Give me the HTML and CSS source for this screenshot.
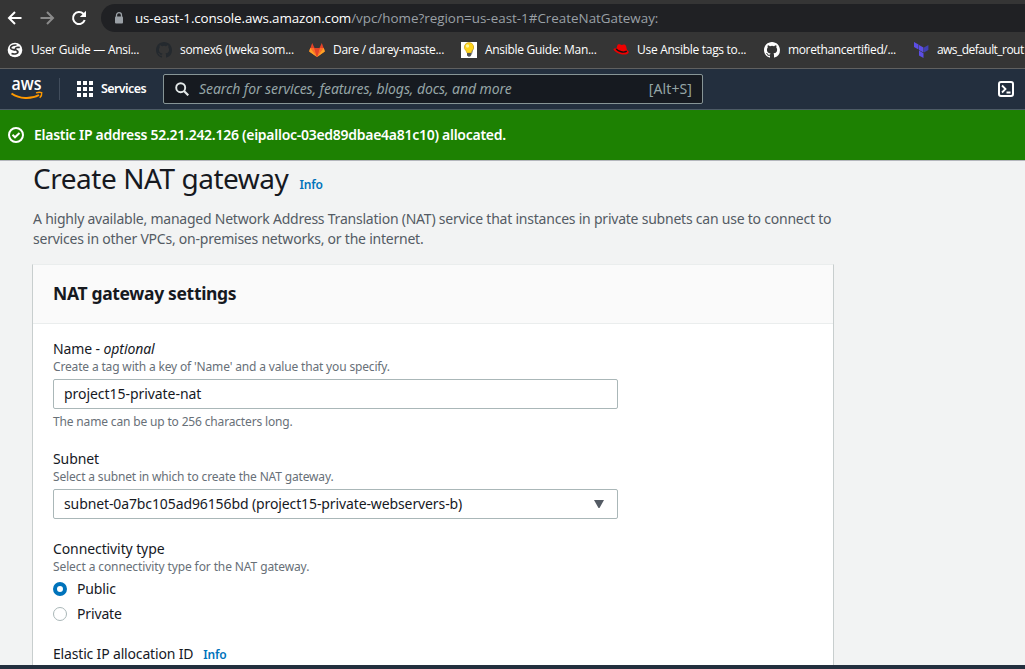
FILE: index.html
```html
<!DOCTYPE html>
<html lang="en">
<head>
<meta charset="utf-8">
<title>Create NAT gateway</title>
<link rel="stylesheet" href="styles.css">
</head>
<body>
<div class="toolbar">
  <svg class="nav-icon" viewBox="0 0 16 16"><path d="M14.5 8H2M8 2L2 8l6 6" fill="none" stroke="#fff" stroke-width="2"/></svg>
  <svg class="nav-icon" viewBox="0 0 16 16"><path d="M1.5 8H14M8 2l6 6-6 6" fill="none" stroke="#8b8b8b" stroke-width="2"/></svg>
  <svg class="nav-icon" viewBox="0 0 16 16"><path d="M13.7 10A6 6 0 1 1 12.3 3.8L14 5.500" fill="none" stroke="#fff" stroke-width="2"/><path d="M15 .8v6.200H8.800z" fill="#fff"/></svg>
  <div class="address">
    <svg class="lock" viewBox="0 0 10 12"><path d="M2.500 5V3.200a2.500 2.500 0 0 1 5 0V5" fill="none" stroke="#9aa0a6" stroke-width="1.300"/><rect x="1" y="4.500" width="8" height="7" rx="1" fill="#9aa0a6"/></svg>
    <span class="url"><span class="host">us-east-1.console.aws.amazon.com</span><span class="path">/vpc/home?region=us-east-1#CreateNatGateway:</span></span>
  </div>
</div>
<div class="bookmarks">
  <div class="bm bm1"><svg class="fav" viewBox="0 0 16 16"><circle cx="8" cy="8" r="7.300" fill="#fff"/><path d="M9.500 3C6 2.800 3.200 4.200 3.600 6.200c.3 1.600 3 1.200 4.600 2M12.800 5.500C10.500 5 8.500 5.500 8.300 7c-.1 1.500 2.700 1.400 2.700 3 0 1.500-3 2.700-6.500 1.500" fill="none" stroke="#353535" stroke-width="1.700"/></svg><span>User Guide — Ansi...</span></div>
  <div class="bm bm2"><svg class="fav" viewBox="0 0 16 16"><path fill="#24292e" d="M8 0C3.580 0 0 3.580 0 8c0 3.540 2.290 6.530 5.470 7.590.4.07.55-.17.55-.38 0-.19-.01-.82-.01-1.490-2.010.37-2.530-.49-2.690-.94-.09-.23-.48-.94-.82-1.130-.28-.15-.68-.52-.01-.53.63-.01 1.080.58 1.230.82.72 1.210 1.870.87 2.330.66.07-.52.28-.87.51-1.070-1.780-.2-3.640-.89-3.640-3.950 0-.87.31-1.590.82-2.150-.08-.2-.36-1.020.08-2.120 0 0 .67-.21 2.200.82a7.600 7.600 0 0 1 4 0c1.530-1.040 2.200-.82 2.200-.82.44 1.100.16 1.920.08 2.120.51.56.82 1.270.82 2.150 0 3.070-1.870 3.750-3.650 3.950.29.25.54.73.54 1.480 0 1.070-.01 1.930-.01 2.200 0 .21.15.46.55.38A8 8 0 0 0 16 8c0-4.420-3.580-8-8-8z"/></svg><span>somex6 (Iweka som...</span></div>
  <div class="bm bm3"><svg class="fav" viewBox="0 0 16 16"><path fill="#e24329" d="M3.200 1L1 7l7 8 7-8-2.200-6-2.300 5h-5z"/><path fill="#fc6d26" d="M.2 9.500L1.200 6h4L8 15zM15.800 9.500l-1-3.500h-4L8 15z"/><path fill="#fca326" d="M1.200 6L.2 9.500 8 15zM14.800 6l1 3.500L8 15z"/><path fill="#e24329" d="M5.400 6h5.200L8 15z"/></svg><span>Dare / darey-maste...</span></div>
  <div class="bm bm4"><svg class="fav" viewBox="0 0 16 16"><path fill="#fff" d="M0 0h16v16H0z"/><path d="M11 3l2 2-2 7-2 3z" fill="#888"/><path d="M8 .5a4.700 4.700 0 0 0-3 8.300l1 2.200h4l1-2.200A4.700 4.700 0 0 0 8 .5z" fill="#ffd51d" stroke="#c49a15" stroke-width=".6"/><circle cx="6.500" cy="4" r="1.700" fill="#fff7a0"/><path d="M6 11h4v2.500L8 15l-2-1.500z" fill="#555"/></svg><span>Ansible Guide: Man...</span></div>
  <div class="bm bm5"><svg class="fav" viewBox="0 0 16 16"><path d="M3 8l1.300-4.600c.3-1 1.500-1.600 3-1l1.400.5 2-.3c1.500 0 2 .5 2.400 1.700L14 8c1.400.7 2.200 2 1.300 3.200-1.600 2.200-8 1.800-12-1C1 8.700 0 7.500.7 6.800c.5-.5 1.300-.3 2.500-.2z" fill="#e00"/><path d="M3.200 7c2 2.400 7.500 4.200 10.600 2.200" fill="none" stroke="#111" stroke-width="1.400"/></svg><span>Use Ansible tags to...</span></div>
  <div class="bm bm6"><svg class="fav" viewBox="0 0 16 16"><path fill="#fff" d="M8 0C3.580 0 0 3.580 0 8c0 3.540 2.290 6.530 5.470 7.590.4.07.55-.17.55-.38 0-.19-.01-.82-.01-1.490-2.010.37-2.530-.49-2.690-.94-.09-.23-.48-.94-.82-1.130-.28-.15-.68-.52-.01-.53.63-.01 1.080.58 1.230.82.72 1.210 1.870.87 2.330.66.07-.52.28-.87.51-1.070-1.780-.2-3.640-.89-3.640-3.950 0-.87.31-1.590.82-2.150-.08-.2-.36-1.020.08-2.120 0 0 .67-.21 2.200.82a7.600 7.600 0 0 1 4 0c1.530-1.040 2.200-.82 2.200-.82.44 1.100.16 1.920.08 2.120.51.56.82 1.270.82 2.150 0 3.070-1.870 3.750-3.650 3.950.29.25.54.73.54 1.480 0 1.070-.01 1.930-.01 2.200 0 .21.15.46.55.38A8 8 0 0 0 16 8c0-4.420-3.580-8-8-8z"/></svg><span>morethancertified/...</span></div>
  <div class="bm bm7"><svg class="fav" viewBox="0 0 16 16"><path fill="#5c4ee5" d="M1 0l4.500 2.600v5L1 5zM6 3l4.500 2.600v5L6 8zM6 8.600l4.500 2.600V16L6 13.500z"/><path fill="#4040b2" d="M11 5.600L15.400 3v5L11 10.600z"/></svg><span>aws_default_rout</span></div>
</div>
<header class="aws-nav">
  <svg class="aws-logo" viewBox="0 0 32 26"><text class="aws-word" x="0.500" y="14" textLength="30" lengthAdjust="spacingAndGlyphs">aws</text><path d="M.5 17.500c8 5.500 19.500 6 27.500 1.500" fill="none" stroke="#f90" stroke-width="1.900"/><path d="M25 16.800c2.500-.7 4.500-.7 5.700-.2.300 1.800-.5 3.800-2 5.200" fill="none" stroke="#f90" stroke-width="1.400"/></svg>
  <div class="divider"></div>
  <svg class="grid-icon" viewBox="0 0 16 16"><path fill="#fff" d="M0 0h4v4H0zM6 0h4v4H6zM12 0h4v4h-4zM0 6h4v4H0zM6 6h4v4H6zM12 6h4v4h-4zM0 12h4v4H0zM6 12h4v4H6zM12 12h4v4h-4z"/></svg>
  <span class="services">Services</span>
  <div class="search">
    <svg class="search-icon" viewBox="0 0 14 14"><circle cx="5.700" cy="5.700" r="4.500" fill="none" stroke="#e3e8e8" stroke-width="1.900"/><path d="M9 9l4.300 4.300" stroke="#e3e8e8" stroke-width="2.200"/></svg>
    <span class="placeholder">Search for services, features, blogs, docs, and more</span>
    <span class="shortcut">[Alt+S]</span>
  </div>
  <svg class="shell" viewBox="0 0 16 16"><rect x="1" y="1" width="14" height="14" rx="2" fill="none" stroke="#fff" stroke-width="2"/><path d="M4 4.500L7.500 8 4 11.500M8.500 11.500h4" fill="none" stroke="#fff" stroke-width="1.800"/></svg>
</header>
<div class="flash">
  <svg class="check" viewBox="0 0 16 16"><circle cx="8" cy="8" r="7" fill="none" stroke="#fff" stroke-width="2"/><path d="M4.500 7.800l2.500 2.500 4.500-4.300" fill="none" stroke="#fff" stroke-width="2"/></svg>
  <span class="flash-text">Elastic IP address 52.21.242.126 (eipalloc-03ed89dbae4a81c10) allocated.</span>
</div>
<main class="page">
  <div class="heading"><h1>Create NAT gateway</h1><a class="info">Info</a></div>
  <p class="intro">A highly available, managed Network Address Translation (NAT) service that instances in private subnets can use to connect to<br>services in other VPCs, on-premises networks, or the internet.</p>
  <section class="card">
    <div class="card-head"><h2>NAT gateway settings</h2></div>
    <div class="card-body">
      <div class="field">
        <div class="label">Name -&nbsp;<i>optional</i></div>
        <div class="hint">Create a tag with a key of 'Name' and a value that you specify.</div>
        <div class="control"><span>project15-private-nat</span></div>
        <div class="hint constraint">The name can be up to 256 characters long.</div>
      </div>
      <div class="field">
        <div class="label">Subnet</div>
        <div class="hint">Select a subnet in which to create the NAT gateway.</div>
        <div class="control"><span class="selected">subnet-0a7bc105ad96156bd (project15-private-webservers-b)</span><svg class="caret" viewBox="0 0 10 8"><path d="M0 0h10L5.500 8h-1z" fill="#545b64"/></svg></div>
      </div>
      <div class="field">
        <div class="label">Connectivity type</div>
        <div class="hint hint-type">Select a connectivity type for the NAT gateway.</div>
        <div class="options">
          <div class="option"><span class="radio on"></span><span>Public</span></div>
          <div class="option"><span class="radio"></span><span>Private</span></div>
        </div>
      </div>
      <div class="field">
        <div class="label label-eip"><span class="eip">Elastic IP allocation ID</span><a class="info">Info</a></div>
      </div>
    </div>
  </section>
</main>
<footer class="footer"></footer>
</body>
</html>
```
FILE: styles.css
```css
* { box-sizing: border-box; }
body {
  margin: 0; width: 1025px; height: 669px; overflow: hidden;
  display: flex; flex-direction: column;
  background: #f2f3f3; color: #16191f;
  font: 14px/20px "Noto Sans", sans-serif;
}
svg { flex: none; display: block; }
span, a, h1, h2 { white-space: nowrap; }
.toolbar { height: 36px; flex: none; background: #353535; display: flex; align-items: center; padding-left: 7px; gap: 16px; }
.nav-icon { width: 16px; height: 16px; }
.address { flex: 1; height: 28px; margin: 0 -20px 0 -2px; border-radius: 14px; background: #202124; display: flex; align-items: center; padding-left: 13px; }
.lock { width: 10px; height: 12px; margin-right: 11px; }
.url { font: 13.4px/20px "Open Sans", sans-serif; color: #9aa0a6; }
.host { color: #fff; letter-spacing: -0.12px; }
.bookmarks { height: 33px; flex: none; background: #353535; border-bottom: 1px solid #606060; display: flex; padding: 6px 0 0 7px; overflow: hidden; }
.bm { flex: none; display: flex; gap: 8px; align-items: center; height: 16px; color: #fff; font: 12px/16px "Open Sans", sans-serif; letter-spacing: -0.29px; }
.fav { width: 16px; height: 16px; }
.bm1 { width: 149px; }
.bm2 { width: 153px; }
.bm3, .bm4 { width: 152px; }
.bm5 { width: 151px; }
.bm6 { width: 149px; letter-spacing: -0.36px; }
.bm7 { letter-spacing: -0.55px; }
.aws-nav { height: 40px; flex: none; background: #232f3e; display: flex; align-items: center; padding: 0 11px; }
.aws-logo { width: 32px; height: 26px; margin-right: 16px; overflow: visible; }
.aws-word { font: 600 18px/1 "Open Sans", sans-serif; fill: #fff; }
.divider { width: 1px; height: 22px; background: #414d5c; margin-right: 17px; }
.grid-icon { width: 16px; height: 16px; margin-right: 8px; }
.services { color: #fff; font-weight: 600; font-size: 12.5px; letter-spacing: -0.6px; width: 62px; }
.search { width: 540px; height: 30px; border: 1px solid #879596; border-radius: 2px; background: #161a20; display: flex; align-items: center; color: #95a5a6; padding: 0 10px 0 11px; }
.search-icon { width: 14px; height: 14px; margin-right: 10px; }
.placeholder { font-style: italic; flex: 1; letter-spacing: -0.08px; }
.shortcut { letter-spacing: 0.1px; }
.shell { width: 16px; height: 16px; margin-left: auto; }
.flash { height: 52px; flex: none; background: #1d8102; border-top: 1px solid #4d5b66; border-bottom: 1px solid #b5b7bd; display: flex; align-items: center; padding-left: 8px; gap: 10px; color: #fff; font-weight: 600; letter-spacing: -0.275px; }
.check { width: 16px; height: 16px; }
.page { flex: 1; min-height: 0; padding-left: 32px; display: flex; flex-direction: column; }
.heading { flex: none; display: flex; align-items: baseline; gap: 11px; height: 34px; padding-left: 1px; }
h1 { margin: 0; font-size: 28px; font-weight: 400; line-height: 34px; letter-spacing: -0.46px; }
.info { color: #0073bb; font-size: 12px; font-weight: 600; letter-spacing: -0.2px; }
.intro { flex: none; margin: 14px 0 15px 1px; color: #545b64; letter-spacing: -0.226px; white-space: nowrap; }
.card { width: 802px; flex: 1; min-height: 0; overflow: hidden; background: #fff; border: 1px solid #c8cece; border-top-color: #eaeded; border-bottom: 0; }
.card-head { height: 59px; background: #fafafa; border-bottom: 1px solid #eaeded; padding: 17px 20px; }
h2 { margin: 0; font-size: 17.5px; line-height: 23px; font-weight: 700; letter-spacing: -0.33px; }
.card-body { padding: 15px 20px 0; display: flex; flex-direction: column; gap: 20px; }
.label { height: 20px; display: flex; align-items: baseline; letter-spacing: -0.1px; }
.label-eip { gap: 10px; }
.eip { letter-spacing: -0.17px; }
.hint { font-size: 12px; line-height: 16px; color: #687078; height: 16px; letter-spacing: -0.16px; white-space: nowrap; }
.hint-type { letter-spacing: -0.11px; }
.control { width: 565px; height: 30px; margin-top: 4px; border: 1px solid #aab7b8; border-radius: 2px; padding: 0 13px 0 10px; display: flex; align-items: center; justify-content: space-between; letter-spacing: -0.05px; }
.selected { letter-spacing: -0.11px; }
.constraint { margin: 5px 0 -1px; }
.caret { width: 10px; height: 8px; }
.options { display: flex; flex-direction: column; gap: 5px; margin-top: 4px; letter-spacing: -0.15px; }
.option { display: flex; align-items: center; height: 20px; gap: 10px; }
.radio { width: 14px; height: 14px; border: 1px solid #aab7b8; border-radius: 50%; background: #fff; }
.radio.on { border: 4px solid #0073bb; }
.footer { height: 4px; flex: none; background: #232f3e; }
```
